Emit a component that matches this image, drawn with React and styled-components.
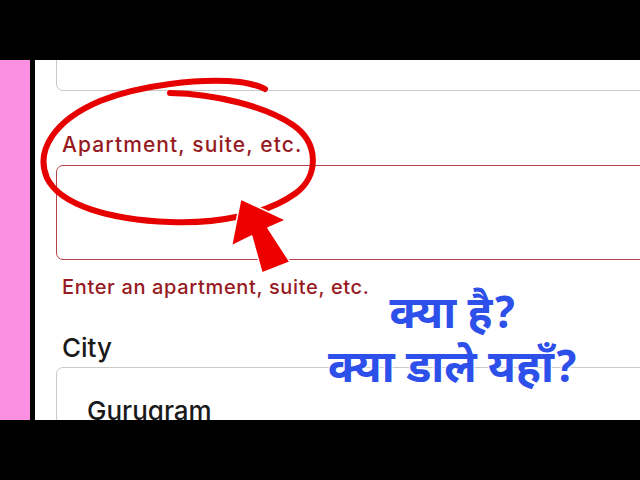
import React from 'react';
import styled, { createGlobalStyle } from 'styled-components';

const Global = createGlobalStyle`
  * { box-sizing: border-box; }
  html, body { margin: 0; padding: 0; background: #000; }
  body { font-family: Inter, "Liberation Sans", Arial, sans-serif; }
`;

const App = () => {
  return (
    <Frame>
      <Global />
      <Letterbox />
      <Stage>
        <PinkEdge />
        <Bezel />
        <Screen>
          <Form>
            <Input $cut />
            <Label $error>Apartment, suite, etc.</Label>
            <Input $error $tall />
            <Hint>Enter an apartment, suite, etc.</Hint>
            <Label $big>City</Label>
            <Input>
              <Value>Gurugram</Value>
            </Input>
          </Form>

          <Marks viewBox="35 60 605 360">
            <path
              d="M170,93 C215,94 265,106 293,125 C319,143 319,176 296,193 C266,215 215,224 170,222 C110,220 60,205 47,178 C35,150 55,120 100,101 C140,85 200,78 240,82 C252,84 260,86 265,89"
              fill="none"
              stroke="#e60000"
              strokeWidth="6"
              strokeLinecap="round"
            />
            <polygon
              points="240.7,199 231.5,246 251.7,236 262,273 290,262 268,228 286,220"
              fill="#ee0000"
              stroke="#fff"
              strokeWidth="1.5"
              strokeLinejoin="round"
            />
          </Marks>

          <Caption>
            <CaptionLine>क्या है?</CaptionLine>
            <CaptionLine>क्या डाले यहाँ?</CaptionLine>
          </Caption>
        </Screen>
      </Stage>
      <Letterbox />
    </Frame>
  );
};

export default App;

const Frame = styled.div`
  width: 640px;
  height: 480px;
  display: flex;
  flex-direction: column;
  background: #000;
  overflow: hidden;
`;

const Letterbox = styled.div`
  height: 60px;
  flex: none;
  background: #000;
`;

const Stage = styled.div`
  height: 360px;
  display: flex;
`;

const PinkEdge = styled.div`
  width: 30px;
  background: #fb8fe2;
`;

const Bezel = styled.div`
  width: 5px;
  background: #050505;
`;

const Screen = styled.div`
  flex: 1;
  position: relative;
  background: #fff;
  overflow: hidden;
`;

const Form = styled.div`
  display: flex;
  flex-direction: column;
  padding-left: 21px;
  width: 640px;
`;

const Input = styled.div`
  height: ${p => (p.$tall ? '95px' : '58px')};
  margin-top: ${p => (p.$cut ? '-27px' : '4px')};
  margin-bottom: ${p => (p.$cut ? '41px' : '0')};
  border: 1.5px solid ${p => (p.$error ? '#b8424a' : '#c9c9c9')};
  border-radius: 7px;
  background: #fff;
  padding: 27px 0 0 30px;
`;

const Label = styled.div`
  font-size: ${p => (p.$big ? '26px' : '21px')};
  font-weight: 500;
  line-height: ${p => (p.$big ? '31px' : '25px')};
  letter-spacing: ${p => (p.$big ? '0' : '1.1px')};
  color: ${p => (p.$error ? '#971a23' : '#1a1a1a')};
  padding-left: 6px;
  margin-top: ${p => (p.$big ? '33px' : '0')};
  margin-bottom: ${p => (p.$big ? '0' : '4px')};
`;

const Hint = styled.div`
  font-size: 20px;
  font-weight: 500;
  line-height: 24px;
  letter-spacing: 0.65px;
  color: #971a23;
  padding-left: 6px;
  margin-top: 15px;
`;

const Value = styled.div`
  font-size: 26px;
  font-weight: 500;
  line-height: 31px;
  color: #1a1a1a;
`;

const Marks = styled.svg`
  position: absolute;
  inset: 0;
  width: 605px;
  height: 360px;
  pointer-events: none;
`;

const Caption = styled.div`
  position: absolute;
  left: 273px;
  top: 231px;
  width: 290px;
  display: flex;
  flex-direction: column;
  align-items: center;
`;

const CaptionLine = styled.div`
  font-family: "Noto Sans Devanagari", "Noto Sans", sans-serif;
  font-weight: 700;
  font-size: 44px;
  line-height: 54px;
  color: #2e50ea;
  white-space: nowrap;
  text-shadow: 0 0 3px #fff, 0 0 3px #fff, 0 0 3px #fff;
`;
